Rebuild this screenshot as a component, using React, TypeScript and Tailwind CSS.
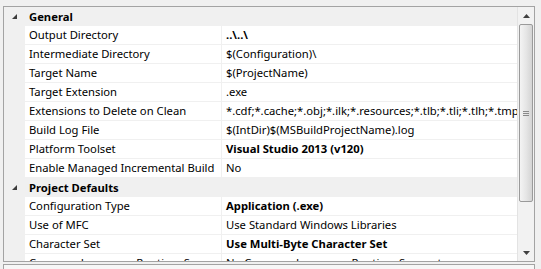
type Row = { name: string; value: string; bold?: boolean };

const general: Row[] = [
  { name: "Output Directory", value: "..\\..\\", bold: true },
  { name: "Intermediate Directory", value: "$(Configuration)\\" },
  { name: "Target Name", value: "$(ProjectName)" },
  { name: "Target Extension", value: ".exe" },
  { name: "Extensions to Delete on Clean", value: "*.cdf;*.cache;*.obj;*.ilk;*.resources;*.tlb;*.tli;*.tlh;*.tmp;*.rsp;*.pgc;*.pgd;*.meta" },
  { name: "Build Log File", value: "$(IntDir)$(MSBuildProjectName).log" },
  { name: "Platform Toolset", value: "Visual Studio 2013 (v120)", bold: true },
  { name: "Enable Managed Incremental Build", value: "No" },
];

const defaults: Row[] = [
  { name: "Configuration Type", value: "Application (.exe)", bold: true },
  { name: "Use of MFC", value: "Use Standard Windows Libraries" },
  { name: "Character Set", value: "Use Multi-Byte Character Set", bold: true },
  { name: "Common Language Runtime Support", value: "No Common Language Runtime Support" },
];

function Category({ title }: { title: string }) {
  return (
    <div className="flex h-[19px] shrink-0 items-center bg-[#f0f0f0]">
      <div className="flex w-[21px] shrink-0 justify-center pl-[1px]">
        <svg width="6" height="6" viewBox="0 0 6 6">
          <polygon points="5,0 5,5 0,5" fill="#3c3c3c" />
        </svg>
      </div>
      <span className="pl-[4px] font-bold text-black">{title}</span>
    </div>
  );
}

function PropRow({ row }: { row: Row }) {
  return (
    <div className="flex h-[19px] shrink-0">
      <div className="w-[21px] shrink-0 bg-[#f0f0f0]" />
      <div className="flex w-[197px] shrink-0 items-center overflow-hidden whitespace-nowrap border-b border-r border-[#f0f0f0] pl-[4px] text-black">
        {row.name}
      </div>
      <div
        className={
          row.bold
            ? "flex min-w-0 flex-1 items-center overflow-hidden whitespace-nowrap border-b border-[#f0f0f0] pl-[4px] font-bold text-black"
            : "flex min-w-0 flex-1 items-center overflow-hidden whitespace-nowrap border-b border-[#f0f0f0] pl-[4px] text-black"
        }
      >
        {row.value}
      </div>
    </div>
  );
}

function ScrollBar() {
  return (
    <div className="flex w-[17px] shrink-0 flex-col border-l border-[#e3e3e3] bg-[#f2f2f2]">
      <div className="flex h-[17px] shrink-0 items-center justify-center">
        <svg width="7" height="4" viewBox="0 0 7 4">
          <polygon points="3.5,0 7,4 0,4" fill="#404040" />
        </svg>
      </div>
      <div className="mx-[1px] h-[178px] shrink-0 rounded-[2px] border border-[#9a9a9a] bg-gradient-to-r from-[#f4f4f4] via-[#e6e6e6] to-[#d4d4d4]">
        <div className="flex h-full flex-col items-center justify-center gap-[1px]">
          <div className="h-[1px] w-[6px] bg-[#8a8a8a]" />
          <div className="h-[1px] w-[6px] bg-[#8a8a8a]" />
          <div className="h-[1px] w-[6px] bg-[#8a8a8a]" />
        </div>
      </div>
      <div className="flex-1" />
      <div className="flex h-[17px] shrink-0 items-center justify-center">
        <svg width="7" height="4" viewBox="0 0 7 4">
          <polygon points="0,0 7,0 3.5,4" fill="#404040" />
        </svg>
      </div>
    </div>
  );
}

export default function App() {
  return (
    <div className="h-[269px] w-[541px] overflow-hidden bg-[#f0f0f0] pl-[3px] pt-[6px] font-['Segoe_UI','Noto_Sans',sans-serif] text-[11.25px] leading-none">
      <div className="flex h-[256px] w-[532px] border border-[#a3a3a3] bg-white">
        <div className="flex min-w-0 flex-1 flex-col overflow-hidden">
          <Category title="General" />
          {general.map((r) => (
            <PropRow key={r.name} row={r} />
          ))}
          <Category title="Project Defaults" />
          {defaults.map((r) => (
            <PropRow key={r.name} row={r} />
          ))}
        </div>
        <ScrollBar />
      </div>
      <div className="mt-[2px] h-[20px] w-[532px] border border-[#a3a3a3] bg-[#f7f7f7]" />
    </div>
  );
}
